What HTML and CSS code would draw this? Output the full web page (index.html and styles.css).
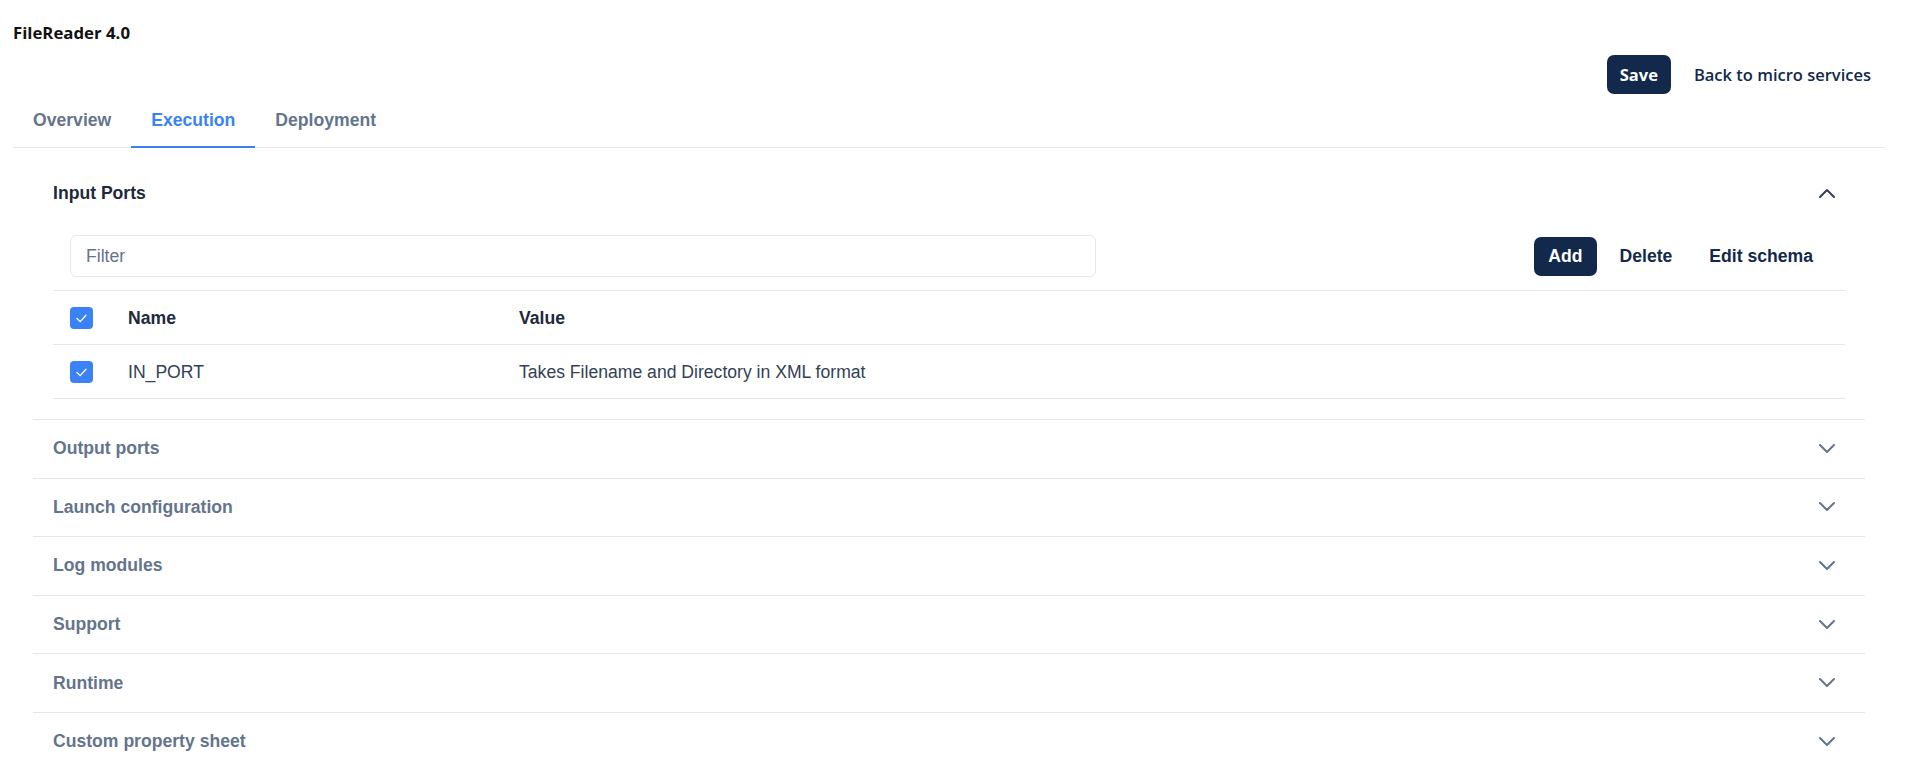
FILE: index.html
```html
<!DOCTYPE html>
<html lang="en">
<head>
    <meta charset="UTF-8">
    <meta name="viewport" content="width=device-width, initial-scale=1.0">
    <title>FileReader 4.0 - Execution</title>
    <link rel="stylesheet" href="styles.css">
</head>
<body>
    <div class="page">
        <h1 class="title">FileReader 4.0</h1>

        <div class="actions">
            <button class="btn btn-dark btn-save">Save</button>
            <a class="back-link" href="#">Back to micro services</a>
        </div>

        <nav class="tabs">
            <a class="tab" href="#">Overview</a>
            <a class="tab active" href="#">Execution</a>
            <a class="tab" href="#">Deployment</a>
        </nav>

        <div class="panels">
            <!-- Input ports (expanded) -->
            <section class="panel open">
                <div class="panel-header">
                    <span>Input Ports</span>
                    <svg class="chevron" width="16" height="10" viewBox="0 0 16 10"><polyline points="1,9 8,2 15,9" /></svg>
                </div>
                <div class="panel-body">
                    <div class="toolbar">
                        <input class="filter" type="text" placeholder="Filter">
                        <div class="toolbar-buttons">
                            <button class="btn btn-dark">Add</button>
                            <button class="btn btn-plain">Delete</button>
                            <button class="btn btn-plain">Edit schema</button>
                        </div>
                    </div>

                    <table class="ports-table">
                        <colgroup>
                            <col class="col-check">
                            <col class="col-name">
                            <col>
                        </colgroup>
                        <thead>
                            <tr>
                                <th><span class="checkbox"><svg width="23" height="22" viewBox="0 0 23 22"><polyline points="7,11.5 10.2,14.6 16,8.2" /></svg></span></th>
                                <th>Name</th>
                                <th>Value</th>
                            </tr>
                        </thead>
                        <tbody>
                            <tr>
                                <td><span class="checkbox"><svg width="23" height="22" viewBox="0 0 23 22"><polyline points="7,11.5 10.2,14.6 16,8.2" /></svg></span></td>
                                <td>IN_PORT</td>
                                <td>Takes Filename and Directory in XML format</td>
                            </tr>
                        </tbody>
                    </table>
                </div>
            </section>

            <!-- Collapsed sections -->
            <section class="panel">
                <div class="panel-header">
                    <span>Output ports</span>
                    <svg class="chevron" width="16" height="10" viewBox="0 0 16 10"><polyline points="1,1 8,8 15,1" /></svg>
                </div>
            </section>
            <section class="panel">
                <div class="panel-header">
                    <span>Launch configuration</span>
                    <svg class="chevron" width="16" height="10" viewBox="0 0 16 10"><polyline points="1,1 8,8 15,1" /></svg>
                </div>
            </section>
            <section class="panel">
                <div class="panel-header">
                    <span>Log modules</span>
                    <svg class="chevron" width="16" height="10" viewBox="0 0 16 10"><polyline points="1,1 8,8 15,1" /></svg>
                </div>
            </section>
            <section class="panel">
                <div class="panel-header">
                    <span>Support</span>
                    <svg class="chevron" width="16" height="10" viewBox="0 0 16 10"><polyline points="1,1 8,8 15,1" /></svg>
                </div>
            </section>
            <section class="panel">
                <div class="panel-header">
                    <span>Runtime</span>
                    <svg class="chevron" width="16" height="10" viewBox="0 0 16 10"><polyline points="1,1 8,8 15,1" /></svg>
                </div>
            </section>
            <section class="panel">
                <div class="panel-header">
                    <span>Custom property sheet</span>
                    <svg class="chevron" width="16" height="10" viewBox="0 0 16 10"><polyline points="1,1 8,8 15,1" /></svg>
                </div>
            </section>
        </div>
    </div>
</body>
</html>
```

FILE: styles.css
```css
:root {
    --navy: #13294b;
    --blue: #3b82f6;
    --text-dark: #1e293b;
    --text-body: #334155;
    --text-muted: #64748b;
    --border: #e2e8f0;
}

* {
    margin: 0;
    padding: 0;
    box-sizing: border-box;
}

body {
    font-family: 'Liberation Sans', Arial, sans-serif;
    font-size: 17.6px;
    background: #fff;
    color: var(--text-dark);
}

.page {
    padding: 0 20px 0 13px;
}

.title {
    padding-top: 22px;
    font-family: 'Open Sans', 'Liberation Sans', sans-serif;
    font-size: 16.8px;
    font-weight: 700;
    line-height: 22px;
    color: #111;
}

/* Save / back */
.actions {
    display: flex;
    justify-content: flex-end;
    align-items: center;
    margin-top: 11px;
    height: 39px;
}

.btn {
    height: 39px;
    padding: 0 14px;
    border: none;
    border-radius: 7px;
    background: none;
    font-family: inherit;
    font-size: 17.6px;
    font-weight: 700;
    cursor: pointer;
}

.btn-dark {
    background: var(--navy);
    color: #fff;
}

.btn-plain {
    color: var(--navy);
}

.btn-save {
    padding: 0 13px;
    font-family: 'Open Sans', 'Liberation Sans', sans-serif;
    font-size: 16.5px;
}

.back-link {
    margin-left: 23px;
    padding-right: 14px;
    font-family: 'Open Sans', 'Liberation Sans', sans-serif;
    font-size: 16.5px;
    font-weight: 600;
    color: var(--navy);
    text-decoration: none;
}

/* Tabs */
.tabs {
    display: flex;
    border-bottom: 1px solid #e5e7eb;
}

.tab {
    padding: 16px 20px;
    line-height: 20px;
    font-weight: 700;
    color: var(--text-muted);
    text-decoration: none;
    border-bottom: 2px solid transparent;
    margin-bottom: -1px;
}

.tab.active {
    color: var(--blue);
    border-bottom-color: var(--blue);
}

/* Accordion panels */
.panels {
    margin: 16px 20px 0;
}

.panel {
    border-bottom: 1px solid var(--border);
}

.panel:last-child {
    border-bottom: none;
}

.panel-header {
    display: flex;
    justify-content: space-between;
    align-items: center;
    height: 57.6px;
    padding: 0 30px 0 20px;
    font-weight: 700;
    color: var(--text-muted);
}

.panel.open .panel-header {
    height: 58px;
    color: var(--text-dark);
}

.chevron polyline {
    fill: none;
    stroke: var(--text-muted);
    stroke-width: 2;
    stroke-linecap: round;
    stroke-linejoin: round;
}

.panel.open .chevron polyline {
    stroke: #334155;
}

.panel-body {
    padding: 0 20px 20px;
}

.toolbar {
    display: flex;
    justify-content: space-between;
    align-items: center;
    margin: 13px 0;
    padding: 0 18px 0 17px;
}

.filter {
    width: 1026px;
    height: 42px;
    padding: 0 15px;
    border: 1px solid var(--border);
    border-radius: 6px;
    font-family: inherit;
    font-size: 17.6px;
    color: var(--text-body);
    outline: none;
}

.filter::placeholder {
    color: var(--text-muted);
}

.toolbar-buttons {
    display: flex;
    gap: 9px;
}

/* Ports table */
.ports-table {
    width: 100%;
    table-layout: fixed;
    border-collapse: collapse;
    border-top: 1px solid var(--border);
}

.col-check {
    width: 58px;
}

.col-name {
    width: 391px;
}

.ports-table th,
.ports-table td {
    height: 54px;
    padding: 0 17px;
    line-height: 20px;
    text-align: left;
    vertical-align: middle;
    border-bottom: 1px solid var(--border);
}

.ports-table th {
    font-weight: 700;
    color: var(--text-dark);
}

.ports-table td {
    color: var(--text-body);
}

.checkbox {
    display: block;
    width: 23px;
    height: 22px;
    border-radius: 4px;
    background: var(--blue);
}

.checkbox svg {
    display: block;
}

.checkbox polyline {
    fill: none;
    stroke: #fff;
    stroke-width: 1.3;
    stroke-linecap: round;
    stroke-linejoin: round;
}
```
